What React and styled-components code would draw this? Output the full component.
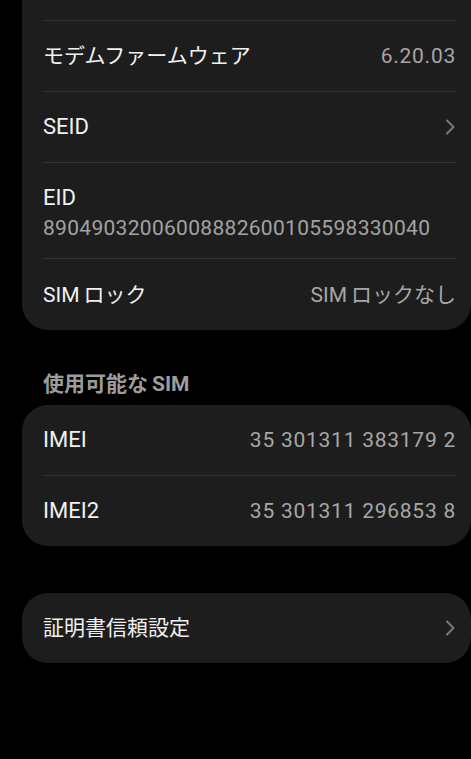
import React from "react";
import styled, { createGlobalStyle } from "styled-components";

const Global = createGlobalStyle`
  html, body { margin: 0; padding: 0; background: #000; }
  body {
    font-family: "Roboto", "Noto Sans CJK JP", sans-serif;
    -webkit-font-smoothing: antialiased;
  }
  #root { overflow: hidden; }
`;

const Page = styled.div`
  display: flex;
  flex-direction: column;
  width: 471px;
  height: 759px;
  padding-left: 22px;
  box-sizing: border-box;
  background: #000;
`;

const Card = styled.div`
  display: flex;
  flex-direction: column;
  background: #1d1d1d;
  border-radius: ${(p) => (p.$cutTop ? "0 0 26px 26px" : "26px")};
  padding: 0 15px 0 21px;
  margin-top: ${(p) => p.$gap || 0}px;
`;

const TopSpacer = styled.div`
  height: 20px;
`;

const Row = styled.div`
  display: flex;
  align-items: center;
  justify-content: space-between;
  min-height: ${(p) => p.$h || 70}px;
  border-top: ${(p) => (p.$first ? "none" : "1px solid #343434")};
`;

const StackRow = styled.div`
  display: flex;
  flex-direction: column;
  justify-content: flex-start;
  padding: 21px 0 14px;
  border-top: 1px solid #343434;
`;

const Title = styled.span`
  font-size: ${(p) => (p.$latin ? 22 : 21)}px;
  line-height: 28px;
  color: #f1f1f1;
  font-weight: 400;
`;

const Value = styled.span`
  font-size: 21px;
  line-height: 28px;
  color: #a7a7a7;
  letter-spacing: ${(p) => (p.$num ? "0.75px" : "0")};
`;

const SubValue = styled.span`
  font-size: 21px;
  line-height: 32px;
  color: #a3a3a3;
  letter-spacing: 0.3px;
`;

const SectionHeader = styled.div`
  font-size: 21px;
  line-height: 28px;
  font-weight: 700;
  color: #9c9c9c;
  padding: 40px 0 7px 21px;
`;

const Gap = styled.span`
  display: inline-block;
  width: ${(p) => p.$w}px;
`;

const ChevronBox = styled.span`
  display: flex;
  align-items: center;
  width: 11px;
  height: 16px;
`;

const Chevron = () => (
  <ChevronBox>
    <svg width="11" height="16" viewBox="0 0 11 16" fill="none">
      <polyline
        points="2,1.5 8.5,8 2,14.5"
        stroke="#7a7a7a"
        strokeWidth="2"
        strokeLinecap="round"
        strokeLinejoin="round"
      />
    </svg>
  </ChevronBox>
);

export default function App() {
  return (
    <>
      <Global />
      <Page>
        <Card $cutTop>
          <TopSpacer />
          <Row>
            <Title>モデムファームウェア</Title>
            <Value $num>6.20.03</Value>
          </Row>
          <Row>
            <Title $latin>SEID</Title>
            <Chevron />
          </Row>
          <StackRow>
            <Title $latin>EID</Title>
            <SubValue>89049032006008882600105598330040</SubValue>
          </StackRow>
          <Row $h={71}>
            <Title>
              SIM<Gap $w={4} />ロック
            </Title>
            <Value>
              SIM<Gap $w={4} />ロックなし
            </Value>
          </Row>
        </Card>

        <SectionHeader>
          使用可能な<Gap $w={4} />SIM
        </SectionHeader>
        <Card>
          <Row $first>
            <Title $latin>IMEI</Title>
            <Value $num>35 301311 383179 2</Value>
          </Row>
          <Row>
            <Title $latin>IMEI2</Title>
            <Value $num>35 301311 296853 8</Value>
          </Row>
        </Card>

        <Card $gap={47}>
          <Row $first $h={70}>
            <Title>証明書信頼設定</Title>
            <Chevron />
          </Row>
        </Card>
      </Page>
    </>
  );
}
